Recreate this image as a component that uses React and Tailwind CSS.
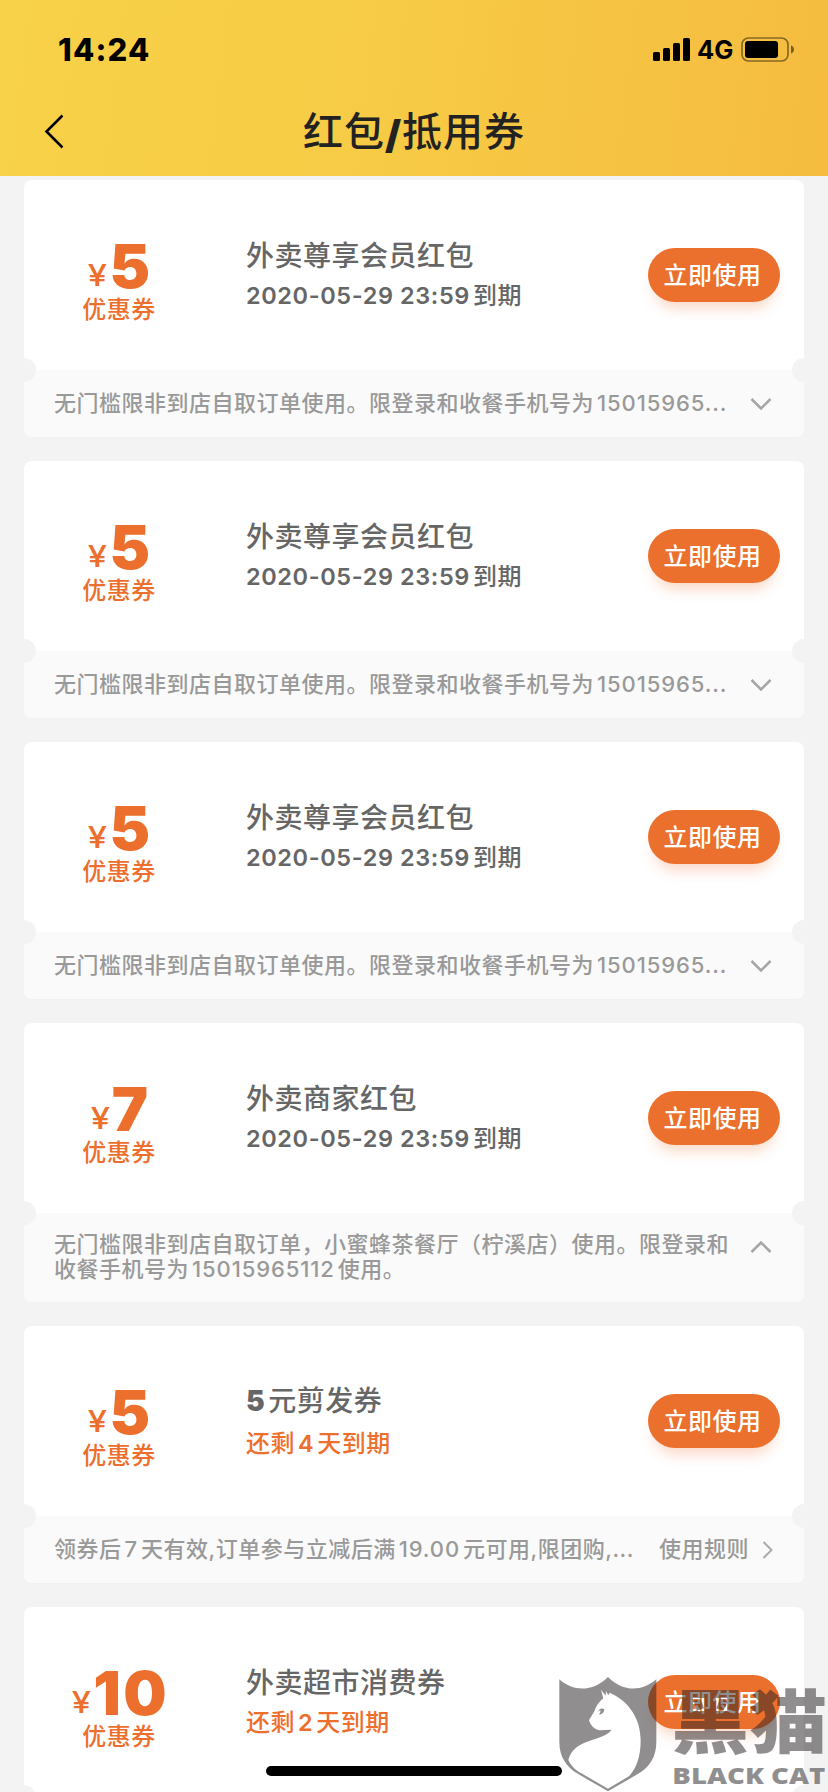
import React from 'react';

const coupons = [
  {
    amount: '5',
    title: '外卖尊享会员红包',
    expiry: '2020-05-29 23:59到期',
    rule: '无门槛限非到店自取订单使用。限登录和收餐手机号为15015965...',
  },
  {
    amount: '5',
    title: '外卖尊享会员红包',
    expiry: '2020-05-29 23:59到期',
    rule: '无门槛限非到店自取订单使用。限登录和收餐手机号为15015965...',
  },
  {
    amount: '5',
    title: '外卖尊享会员红包',
    expiry: '2020-05-29 23:59到期',
    rule: '无门槛限非到店自取订单使用。限登录和收餐手机号为15015965...',
  },
  {
    amount: '7',
    title: '外卖商家红包',
    expiry: '2020-05-29 23:59到期',
    rule: ['无门槛限非到店自取订单，小蜜蜂茶餐厅（柠溪店）使用。限登录和', '收餐手机号为15015965112使用。'],
    expanded: true,
  },
  {
    amount: '5',
    title: '5元剪发券',
    expiry: '还剩4天到期',
    urgent: true,
    roomy: true,
    rule: '领券后7天有效,订单参与立减后满19.00元可用,限团购,...',
    link: '使用规则',
  },
  {
    amount: '10',
    title: '外卖超市消费券',
    expiry: '还剩2天到期',
    urgent: true,
  },
];

// Adds a little air between Chinese characters and runs of digits
const Mixed = ({ text, digits = '' }) => {
  const parts = text.split(/([0-9][0-9\-:. ]*)/).filter(Boolean);
  return parts.map((part, i) => {
    if (!/^[0-9]/.test(part)) return <span key={i}>{part}</span>;
    const before = i > 0 ? 'ml-[3px]' : '';
    const after = i < parts.length - 1 ? 'mr-[3px]' : '';
    return (
      <span key={i} className={`whitespace-pre ${digits} ${before} ${after}`}>
        {part}
      </span>
    );
  });
};

const StatusBar = () => (
  <div className="flex h-[88px] items-center justify-between pl-[58px] pr-[33px]">
    <span className="pt-[11px] text-[31px] leading-none font-extrabold tracking-[1.2px] text-black">14:24</span>
    <div className="flex items-center pt-[11px]">
      <svg width="37" height="23" viewBox="0 0 37 23" className="fill-black">
        <rect x="0" y="14" width="7" height="9" rx="1.5" />
        <rect x="10" y="10" width="7" height="13" rx="1.5" />
        <rect x="20" y="5" width="7" height="18" rx="1.5" />
        <rect x="30" y="0" width="7" height="23" rx="1.5" />
      </svg>
      <span className="ml-[7px] w-[44px] text-[25.5px] leading-none font-bold text-black">4G</span>
      <svg width="54" height="25" viewBox="0 0 54 25">
        <rect x="1" y="1" width="46" height="23" rx="6.5" fill="none" stroke="#000" strokeOpacity="0.45" strokeWidth="1.7" />
        <rect x="4" y="4" width="33" height="17" rx="3" />
        <path d="M50 8.5c1.8.6 3 2.100 3 4s-1.200 3.400-3 4z" fillOpacity="0.5" />
      </svg>
    </div>
  </div>
);

const Header = () => (
  <header className="h-[176px] bg-[linear-gradient(97deg,#f8d249_0%,#f7cb45_45%,#f5bc40_100%)]">
    <StatusBar />
    <div className="grid h-[88px] grid-cols-[100px_1fr_100px] items-center">
      <svg width="22" height="36" viewBox="0 0 22 36" className="ml-[43px]" fill="none" stroke="#000" strokeWidth="2.6">
        <path d="M19.500 1.500 3.500 17.500l16 16" />
      </svg>
      <h1 className="flex items-center justify-center pb-[1px] text-[40px] leading-none font-medium tracking-[1px] text-[#222]">
        红包<span className="pt-[5px] text-[39px] font-black">/</span>抵用券
      </h1>
    </div>
  </header>
);

const Arrow = ({ direction }) => {
  if (direction === 'right') {
    return (
      <svg width="12" height="20" viewBox="0 0 12 20" className="ml-[13px] mr-[6px]" fill="none" stroke="#aaa" strokeWidth="2">
        <path d="m1.500 2 8 8-8 8" />
      </svg>
    );
  }
  return (
    <svg width="22" height="14" viewBox="0 0 22 14" className="mr-[8px]" fill="none" stroke="#a6a6a6" strokeWidth="2.500">
      <path d={direction === 'up' ? 'm1.500 12 9.500-9.500 9.500 9.500' : 'm1.500 2 9.500 9.500L20.500 2'} />
    </svg>
  );
};

const Coupon = ({ coupon }) => {
  const { amount, title, expiry, urgent, roomy, rule, expanded, link } = coupon;
  return (
    <section className="relative shrink-0 overflow-hidden rounded-[8px] bg-white">
      <div className="flex h-[190px]">
        <div className="flex w-[190px] flex-col items-center pt-[56px] text-[#ed6f2d]">
          <div className="flex h-[60px] items-baseline pl-[4px] leading-[60px]">
            <span className="relative -top-[2px] mr-[3.5px] scale-x-[1.15] text-[30px] font-medium">¥</span>
            <span className="text-[61px] font-black tracking-[2.5px]">{amount}</span>
          </div>
          <div className="text-[24px] leading-[28px] font-medium tracking-[0.5px]">优惠券</div>
        </div>
        <div className="ml-[32px] flex-1 pt-[58px] font-medium text-[#666]">
          <h2 className={`flex h-[36px] text-[28px] leading-[36px] tracking-[0.5px] ${roomy ? '-mt-px mb-[8px]' : 'mb-[5px]'}`}>
            <Mixed text={title} digits="font-black text-[28px]" />
          </h2>
          <p className={`flex h-[34px] text-[24px] leading-[34px] tracking-[0.5px] ${urgent ? 'text-[#ed6f2d]' : ''}`}>
            <Mixed text={expiry} digits="font-semibold text-[23.5px] tracking-[0.6px]" />
          </p>
        </div>
        <button className="mt-[68px] mr-[24px] h-[54px] w-[132px] rounded-full bg-[#ec702d] pr-[3px] text-center text-[24px] leading-[53px] font-medium tracking-[0.5px] text-white shadow-[0_12px_14px_-6px_rgba(236,112,45,0.28)]">
          立即使用
        </button>
      </div>
      <div className={`flex justify-between bg-[#fafafa] pl-[30px] pr-[24px] text-[22px] font-medium tracking-[0.5px] text-[#999] ${expanded ? 'h-[89px] pt-[19px]' : 'h-[67px] items-center'}`}>
        {rule && (
          <div className="leading-[25px]">
            {[].concat(rule).map((line) => (
              <p key={line} className="flex whitespace-nowrap">
                <Mixed text={line} digits="text-[22px] tracking-[0.9px]" />
              </p>
            ))}
          </div>
        )}
        {link && (
          <div className="flex items-center">
            {link}
            <Arrow direction="right" />
          </div>
        )}
        {rule && !link && (
          <div className={expanded ? 'pt-[8px]' : ''}>
            <Arrow direction={expanded ? 'up' : 'down'} />
          </div>
        )}
      </div>
      <span className="absolute top-[178px] -left-[12px] size-[24px] rounded-full bg-[#f3f3f3]" />
      <span className="absolute top-[178px] -right-[12px] size-[24px] rounded-full bg-[#f3f3f3]" />
    </section>
  );
};

const Watermark = () => (
  <svg width="298" height="202" viewBox="0 0 894 606" className="absolute right-0 bottom-0" fill="#231e1f" fillOpacity="0.5">
    <path
      fillRule="evenodd"
      d="M88 268C130 306 190 306 234 261C278 306 335 306 379 268V455C379 500 360 530 322 553L234 604L146 553C108 530 88 500 88 455ZM213 299L220 325C207 335 198 348 194 362L177 391C181 406 193 418 208 421L245 419C222 455 132 442 115 510C124 530 138 541 154 550L234 596L298 558C323 530 332 493 332 451C332 390 300 334 239 308L235 316L228 304L227 317Z"
    />
    <path d="M205 365C208 355 216 354 223 358C222 369 215 374 207 373C211 369 212 364 211 360Z" />
    <text x="424" y="474" fontSize="208" fontWeight="900" textLength="468" lengthAdjust="spacingAndGlyphs">黑猫</text>
    <text x="427" y="583" fontSize="69" fontWeight="800" textLength="459" lengthAdjust="spacingAndGlyphs" fontFamily="'Open Sans', sans-serif">BLACK CAT</text>
  </svg>
);

const App = () => (
  <div className="relative h-[1792px] w-[828px] overflow-hidden bg-[#f3f3f3] font-[Inter,'Noto_Sans_CJK_SC',sans-serif]">
    <Header />
    <main className="flex flex-col gap-[24px] px-[24px] pt-[4px]">
      {coupons.map((coupon, index) => (
        <Coupon key={index} coupon={coupon} />
      ))}
    </main>
    <div className="absolute bottom-[16px] left-[266px] h-[10px] w-[296px] rounded-full bg-black" />
    <Watermark />
  </div>
);

export default App;
